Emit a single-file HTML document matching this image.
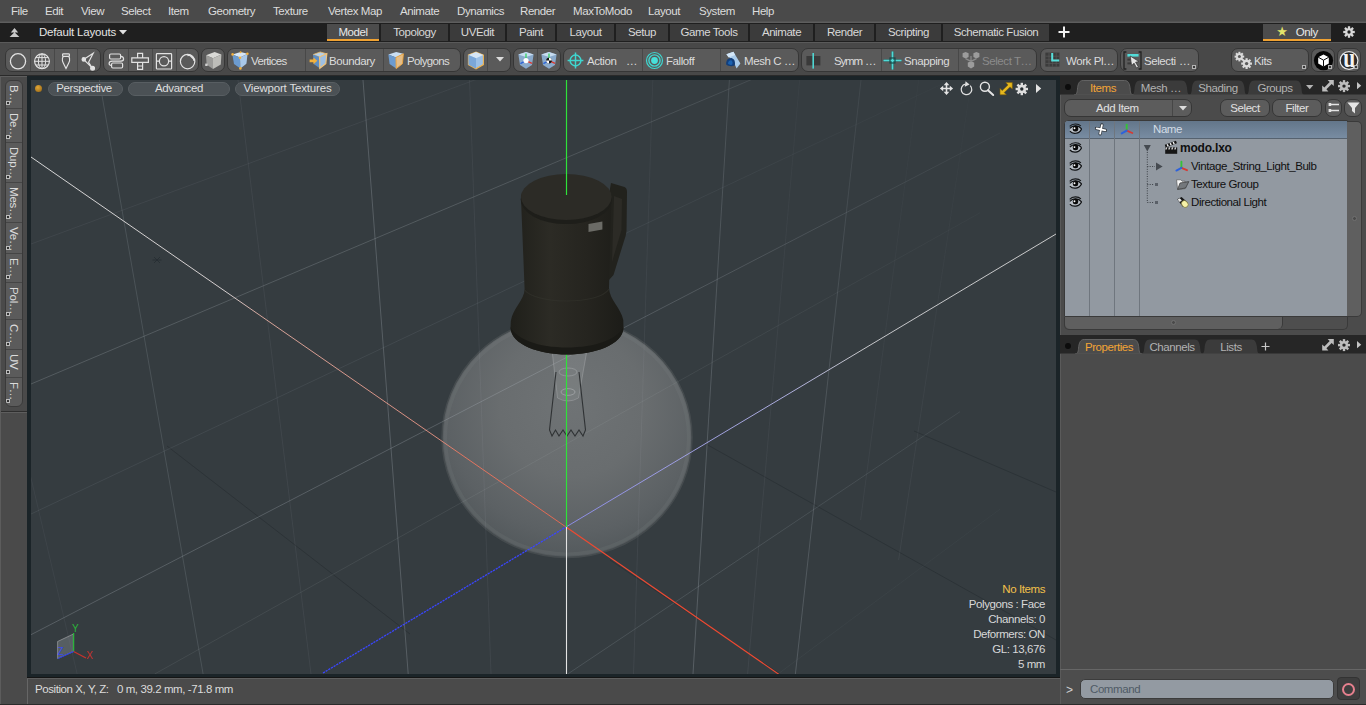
<!DOCTYPE html>
<html lang="en">
<head>
<meta charset="utf-8">
<title>modo.lxo</title>
<style>
*{box-sizing:border-box;margin:0;padding:0}
html,body{width:1366px;height:705px;overflow:hidden;background:#4a4a4a}
body{font-family:"Liberation Sans","DejaVu Sans",sans-serif;font-size:11.5px;letter-spacing:-0.42px;color:#d6d6d6;position:relative}
.abs{position:absolute}
/* menu bar */
#menubar{position:absolute;left:0;top:0;width:1366px;height:23px;background:#4a4a4a;border-bottom:1px solid #5e5e5e;box-shadow:inset 0 -1px 0 #535353}
#menubar span{position:absolute;top:4px;line-height:14px;color:#dcdcdc;white-space:nowrap}
/* layout bar */
#layoutbar{position:absolute;left:0;top:23px;width:1366px;height:19px;background:#1f1f1f}
#layoutbar .lt{position:absolute;top:1px;height:17px;background:#3b3b3b;color:#d8d8d8;text-align:center;line-height:16px;white-space:nowrap}
#layoutbar .lt.act{background:#4c4c4c;border-bottom:2px solid #f0a232;color:#e8e8e8;line-height:16px}
/* toolbar */
#toolbar{position:absolute;left:0;top:42px;width:1366px;height:34px;background:#484848;border-top:1px solid #5a5a5a;border-bottom:1px solid #2a2a2a}
.grp{position:absolute;top:5px;height:24px;background:#5a5a5a;border:1px solid #363636;border-radius:7px;overflow:hidden}
.grp i{position:absolute;top:0;width:1px;height:22px;background:#484848}
.grp span{position:absolute;top:1px;line-height:23px;color:#dcdcdc;white-space:nowrap}
.grp svg{position:absolute}
.grp u{position:absolute;width:4px;height:4px;border:1px solid #b4b4b4;background:#3a3a3a;right:2px;bottom:2px}
/* viewport */
#vpframe{position:absolute;left:27px;top:76px;width:1033px;height:601px;background:#1b2428}
#vp{position:absolute;left:4px;top:4px;width:1025px;height:594px;background:#353c40;overflow:hidden}
.vbtn{position:absolute;top:2px;height:14px;border-radius:7px;background:#4b5155;border:1px solid #585e62;color:#dedede;text-align:center;line-height:10px;white-space:nowrap}
#stats{position:absolute;right:11px;top:502px;text-align:right;line-height:15px;color:#d8d8d8;white-space:nowrap}
/* left sidebar */
#leftbar{position:absolute;left:0;top:76px;width:27px;height:629px;background:#4a4a4a;border-left:1px solid #5c5c5c;box-shadow:inset 0 1px 0 #5e5e5e}
#vtabs{position:absolute;left:4px;top:4px;width:18px;height:327px;background:#5b5b5b;border:1px solid #3a3a3a;border-radius:6px;overflow:hidden}
#vtabs div{position:absolute;left:0;width:16px;border-top:1px solid #454545;color:#dcdcdc;writing-mode:vertical-rl;line-height:16px;white-space:nowrap;padding-top:4px;letter-spacing:-0.2px}
#vtabs div:first-child{border-top:none}
#vtabs u{position:absolute;left:0;bottom:3px;width:4px;height:4px;border:1px solid #bdbdbd;background:#333}
/* status bar */
#status{position:absolute;left:27px;top:678px;width:1033px;height:26px;background:#4a4a4a;border-left:1px solid #666;border-top:1px solid #5e5e5e}
#status span{position:absolute;left:7px;top:3px;line-height:14px;color:#dcdcdc;white-space:nowrap}
/* right panel */
#right{position:absolute;left:1060px;top:76px;width:306px;height:629px;background:#4b4b4b}
.tabbar{position:absolute;left:0;width:306px;height:19px;background:#262626}
.tab{position:absolute;top:4px;height:15px;background:none;color:#b2b2b2;text-align:center;line-height:16px;white-space:nowrap}
.tab.act{color:#f3a536}
.rbtn{position:absolute;height:18px;background:#5c5c5c;border:1px solid #363636;border-radius:7px;color:#e0e0e0;text-align:center;line-height:16px;white-space:nowrap;overflow:hidden}
#list{position:absolute;left:4px;top:44px;width:284px;height:197px;background:#9299a1;border:1px solid #3a3a3a;border-radius:4px 0 0 0;overflow:hidden}
#list .hdr{position:absolute;left:0;top:0;width:284px;height:18px;background:linear-gradient(#63768a,#788ca2);border-bottom:1px solid #56626f}
#list .col{position:absolute;top:0;width:1px;height:197px;background:#6f767e}
#list .row{position:absolute;left:0;width:284px;height:18px;line-height:18px;color:#101010;white-space:nowrap}
#footer{position:absolute;left:0;top:704px;width:1366px;height:1px;background:#2b2b2b}
</style>
</head>
<body>
<div id="menubar">
<span style="left:11px">File</span><span style="left:45px">Edit</span><span style="left:81px">View</span><span style="left:121px">Select</span><span style="left:168px">Item</span><span style="left:208px">Geometry</span><span style="left:273px">Texture</span><span style="left:328px">Vertex Map</span><span style="left:400px">Animate</span><span style="left:457px">Dynamics</span><span style="left:520px">Render</span><span style="left:573px">MaxToModo</span><span style="left:648px">Layout</span><span style="left:699px">System</span><span style="left:752px">Help</span>
</div>
<div id="layoutbar">
<svg class="abs" style="left:9px;top:5px" width="11" height="10" viewBox="0 0 11 10"><path d="M5.5 0L9.2 4.6H1.8Z M5.5 4.2L10.4 9H0.6Z" fill="#c9c9c9"/></svg>
<span class="abs" style="left:39px;top:2px;line-height:14px;color:#e4e4e4;white-space:nowrap;letter-spacing:-0.19px">Default Layouts</span>
<svg class="abs" style="left:119px;top:7px" width="8" height="5" viewBox="0 0 8 5"><path d="M0 0H8L4 4.6Z" fill="#e0e0e0"/></svg>
<div class="lt act" style="left:327px;width:52px">Model</div>
<div class="lt" style="left:381px;width:67px">Topology</div>
<div class="lt" style="left:450px;width:55px">UVEdit</div>
<div class="lt" style="left:507px;width:48px">Paint</div>
<div class="lt" style="left:557px;width:57px">Layout</div>
<div class="lt" style="left:616px;width:52px">Setup</div>
<div class="lt" style="left:670px;width:78px">Game Tools</div>
<div class="lt" style="left:750px;width:63px">Animate</div>
<div class="lt" style="left:815px;width:59px">Render</div>
<div class="lt" style="left:876px;width:65px">Scripting</div>
<div class="lt" style="left:943px;width:106px">Schematic Fusion</div>
<svg class="abs" style="left:1058px;top:3px" width="12" height="12" viewBox="0 0 12 12"><path d="M6 0.5V11.5M0.5 6H11.5" stroke="#f2f2f2" stroke-width="2"/></svg>
<div class="lt act" style="left:1263px;width:68px"><span style="color:#e3e36a;font-size:13px;position:relative;top:0px">&#9733;</span>&nbsp;&nbsp; Only</div>
<svg class="abs" style="left:1342px;top:2px" width="14" height="14" viewBox="-8 -8 16 16"><g fill="#d8d8d8"><circle r="4.4"/><g id="gt1"><rect x="-1.3" y="-6.6" width="2.6" height="13.2"/><rect x="-1.3" y="-6.6" width="2.6" height="13.2" transform="rotate(45)"/><rect x="-1.3" y="-6.6" width="2.6" height="13.2" transform="rotate(90)"/><rect x="-1.3" y="-6.6" width="2.6" height="13.2" transform="rotate(135)"/></g></g><circle r="1.9" fill="#1f1f1f"/></svg>

</div>
<div id="toolbar">
<!-- group 1 : primitive icons -->
<div class="grp" style="left:5px;width:96px">
<i style="left:24px"></i><i style="left:48px"></i><i style="left:71px"></i>
<svg style="left:2px;top:2px" width="20" height="20" viewBox="0 0 20 20"><circle cx="10" cy="10.3" r="7.6" fill="none" stroke="#e2e2e2" stroke-width="1.3"/></svg>
<svg style="left:26px;top:2px" width="20" height="20" viewBox="0 0 20 20" fill="none" stroke="#e2e2e2" stroke-width="1"><circle cx="10" cy="10.3" r="7.4" stroke-width="1.2"/><ellipse cx="10" cy="10.3" rx="3.6" ry="7.4"/><path d="M10 2.9V17.7M2.6 10.3H17.4M3.7 6.6H16.3M3.7 14H16.3"/></svg>
<svg style="left:50px;top:2px" width="20" height="20" viewBox="0 0 20 20" fill="none" stroke="#e2e2e2" stroke-width="1.2"><rect x="6.6" y="2.8" width="6.8" height="2.6" rx="0.8"/><path d="M7.2 5.4C5.2 8.6 6.4 10.6 10 17.4C13.6 10.6 14.8 8.6 12.8 5.4"/></svg>
<svg style="left:73px;top:2px" width="22" height="20" viewBox="0 0 22 20" fill="none" stroke="#e2e2e2" stroke-width="1.2"><path d="M4.6 8.4L14.2 2.2L9.6 11.2L13.4 17.2L4.6 8.4"/><circle cx="4.8" cy="8.4" r="1.7" fill="#e2e2e2"/><circle cx="13.6" cy="17.2" r="1.9" fill="#e2e2e2"/></svg>
</div>
<!-- group 2 : uv icons -->
<div class="grp" style="left:103px;width:96px">
<i style="left:24px"></i><i style="left:48px"></i><i style="left:72px"></i>
<svg style="left:2px;top:2px" width="20" height="20" viewBox="0 0 20 20" fill="none" stroke="#e2e2e2" stroke-width="1.2"><rect x="3.6" y="3" width="11" height="5" rx="1.2"/><rect x="5.6" y="12" width="11" height="5" rx="1.2"/><path d="M14.6 5.4C18.4 5.6 18.6 9.8 15 10.2H6C2.2 10.4 2.2 14.4 5.6 14.6"/></svg>
<svg style="left:26px;top:2px" width="20" height="20" viewBox="0 0 20 20" fill="none" stroke="#e2e2e2" stroke-width="1.2"><path d="M7.6 2.4H12.6V6.8H18.4V11.4H12.6V18.4H7.6V11.4H1.8V6.8H7.6ZM7.6 6.8H12.6M7.6 11.4H12.6M7.6 15H12.6"/></svg>
<svg style="left:50px;top:2px" width="20" height="20" viewBox="0 0 20 20" fill="none" stroke="#e2e2e2" stroke-width="1.2"><rect x="2.4" y="2.6" width="15.2" height="15.4" rx="0.8"/><circle cx="10" cy="10.2" r="4.6"/><path d="M2.4 10.2H5.4M14.6 10.2H17.6"/></svg>
<svg style="left:74px;top:2px" width="20" height="20" viewBox="0 0 20 20" fill="none" stroke="#e2e2e2" stroke-width="1.2"><circle cx="9.6" cy="10.6" r="7.2"/><path d="M9.4 4.6C12.6 3.4 16 6.6 15.8 9.8M11.2 3.8L16.6 9"/></svg>
</div>
<!-- cube -->
<div class="grp" style="left:201px;width:24px">
<svg style="left:2px;top:2px" width="19" height="19" viewBox="0 0 19 19"><path d="M2 4.2L10.6 1L17.4 3.6L9 7.2Z" fill="#d9d9d6"/><path d="M2 4.2L9 7.2V18L2.6 13.6Z" fill="#9c9c9a"/><path d="M9 7.2L17.4 3.6L16.8 13.4L9 18Z" fill="#bdbdb9"/><rect x="1.2" y="12.6" width="2.4" height="2.4" fill="#cfcfcf"/></svg>
</div>
<!-- Vertices / Boundary / Polygons -->
<div class="grp" style="left:227px;width:234px">
<i style="left:77px"></i><i style="left:155px"></i>
<svg style="left:3px;top:2px" width="18" height="19" viewBox="0 0 18 19"><path d="M1.4 3.4L9.6 1L16.6 2.8L9 6.6Z" fill="#d7e6f5"/><path d="M1.4 3.4L9 6.6L9.4 17.6L3 13Z" fill="#6c9bcf"/><path d="M9 6.6L16.6 2.8L15.4 12.8L9.4 17.6Z" fill="#a9c8e8"/><g fill="#f3b13c"><circle cx="1.6" cy="3.4" r="1.3"/><circle cx="9" cy="6.8" r="1.3"/><circle cx="16.4" cy="2.8" r="1.3"/><circle cx="9.4" cy="17.4" r="1.3"/><circle cx="9.6" cy="1.2" r="1"/></g></svg>
<span style="left:23px;letter-spacing:-0.65px">Vertices</span>
<svg style="left:81px;top:2px" width="19" height="19" viewBox="0 0 19 19"><path d="M4 3.6L11.2 1L17.8 2.8L10.6 6Z" fill="#b5d0ea" stroke="#e9b765" stroke-width="0.8"/><path d="M4 3.6L10.6 6L10.8 17.2L5 13.2Z" fill="#5e8ec4"/><path d="M10.6 6L17.8 2.8L16.8 12.6L10.8 17.2Z" fill="#9dbfe3" stroke="#f0c27a" stroke-width="1.2"/><path d="M0.6 8.4H4.4V6.4L8.4 9.8L4.4 13.2V11.2H0.6Z" fill="#f3b13c"/></svg>
<span style="left:101px">Boundary</span>
<svg style="left:159px;top:2px" width="18" height="19" viewBox="0 0 18 19"><path d="M1.4 3.4L9.2 1L16.4 2.8L9 6.4Z" fill="#c9def2"/><path d="M1.4 3.4L9 6.4L9.2 17.6L2.6 13Z" fill="#6c9bcf"/><path d="M9 6.4L16.4 2.8L15.4 12.8L9.2 17.6Z" fill="#e4bd88" stroke="#f0a840" stroke-width="0.9"/></svg>
<span style="left:179px;letter-spacing:-0.65px">Polygons</span>
</div>
<!-- cube + dropdown -->
<div class="grp" style="left:463px;width:48px">
<i style="left:23px"></i>
<svg style="left:3px;top:2px" width="18" height="19" viewBox="0 0 18 19"><path d="M1.4 4L9 1L16.4 4V13.6L9 17.8L1.4 13.6Z" fill="#9cc0e6" stroke="#f0b450" stroke-width="1.1"/><path d="M1.4 4L9 7.2L16.4 4L9 1Z" fill="#d6e6f6"/><path d="M1.4 4L9 7.2V17.8L1.4 13.6Z" fill="#7ba7d8"/></svg>
<svg style="left:32px;top:8px" width="8" height="5" viewBox="0 0 8 5"><path d="M0 0H8L4 4.6Z" fill="#dcdcdc"/></svg>
</div>
<!-- two action center icons -->
<div class="grp" style="left:513px;width:48px">
<i style="left:23px"></i>
<svg style="left:3px;top:2px" width="18" height="19" viewBox="0 0 18 19"><path d="M1.4 3.6L9 1L16.6 3.6L15 14L9 17.8L3 14Z" fill="#8fb2d8" opacity="0.9"/><path d="M1.4 3.6L9 6L16.6 3.6L9 1Z" fill="#c8dcf0"/><path d="M9 9.6V2.4" stroke="#3ecf6a" stroke-width="1.4"/><path d="M9 9.6L3.4 12.6" stroke="#2c63d8" stroke-width="1.4"/><path d="M9 9.6L15 12.4" stroke="#e03a2e" stroke-width="1.4"/><circle cx="9" cy="9.6" r="2.6" fill="#fff"/></svg>
<svg style="left:26px;top:2px" width="18" height="19" viewBox="0 0 18 19"><path d="M1.4 3.6L9 1L16.6 3.6L15 14L9 17.8L3 14Z" fill="#8fb2d8" opacity="0.9"/><path d="M1.4 3.6L9 6L16.6 3.6L9 1Z" fill="#c8dcf0"/><path d="M9 9.6V2.4" stroke="#3ecf6a" stroke-width="1.4"/><path d="M9 9.6L3.4 12.6" stroke="#2c63d8" stroke-width="1.4"/><path d="M9 9.6L15 12.4" stroke="#e03a2e" stroke-width="1.4"/><circle cx="9" cy="9.6" r="2.8" fill="#111"/><path d="M9 9.6V6.8A2.8 2.8 0 0 1 11.8 9.6ZM9 9.6V12.4A2.8 2.8 0 0 1 6.2 9.6Z" fill="#fff"/></svg>
</div>
<!-- Action / Falloff / Mesh C -->
<div class="grp" style="left:563px;width:236px">
<i style="left:78px"></i><i style="left:156px"></i>
<svg style="left:3px;top:3px" width="17" height="17" viewBox="0 0 17 17" fill="none" stroke="#3fd6cf" stroke-width="1.5"><circle cx="8.5" cy="8.5" r="5.4"/><path d="M8.5 0.6V16.4M0.6 8.5H16.4"/></svg>
<span style="left:23px">Action</span><span style="left:62px">…</span>
<svg style="left:81px;top:2px" width="19" height="19" viewBox="0 0 19 19" fill="none" stroke="#3fd6cf"><circle cx="9.5" cy="9.5" r="8" stroke-width="1.2"/><circle cx="9.5" cy="9.5" r="5.6" stroke-width="1.4"/><circle cx="9.5" cy="9.5" r="3.4" fill="#48e0da" stroke="none"/></svg>
<span style="left:102px">Falloff</span>
<svg style="left:160px;top:2px" width="18" height="19" viewBox="0 0 18 19"><path d="M2.4 3.2L9.4 0.8L16.4 12.4L12.6 17.6L9.4 10.6Z" fill="#a9cbea"/><path d="M2.4 3.2L9.4 0.8L11.2 4L4.6 6.4Z" fill="#d3e6f7"/><path d="M2.2 13.6C1.6 9.6 4.4 6.6 8 7.2C10.6 8 11.6 11.4 10.6 14.6C8 15.6 4 15.4 2.2 13.6Z" fill="#123f7c"/><path d="M4 12.8C4 10.4 5.6 9 7.6 9.4C8.8 10.4 8.8 12.4 8 13.8C6.6 14.2 5 13.8 4 12.8Z" fill="#1b62b0"/></svg>
<span style="left:180px">Mesh C</span><span style="left:220px">…</span>
</div>
<!-- Symm / Snapping / Select T -->
<div class="grp" style="left:801px;width:236px">
<i style="left:79px"></i><i style="left:156px"></i>
<svg style="left:4px;top:4px" width="16" height="16" viewBox="0 0 16 16"><rect x="0.4" y="3" width="14" height="9.4" fill="#3a3a3a"/><rect x="6.4" y="0" width="1.6" height="15.6" fill="#4fd6d2"/></svg>
<span style="left:32px;letter-spacing:-1.2px">Symm</span><span style="left:63px;letter-spacing:-1px">…</span>
<svg style="left:81px;top:2px" width="19" height="19" viewBox="0 0 19 19"><path d="M9.5 0.6V18.4M0.6 9.5H18.4" stroke="#2aa9a6" stroke-width="2.2"/><path d="M9.5 0.6V18.4M0.6 9.5H18.4" stroke="#55e0dc" stroke-width="0.9"/><rect x="7" y="7" width="5" height="5" fill="none" stroke="#1a4a4a" stroke-width="1.2"/></svg>
<span style="left:102px">Snapping</span>
<svg style="left:160px;top:2px" width="18" height="19" viewBox="0 0 18 19"><g fill="#9c9c9c"><path d="M0.6 2.2L3.6 1L6.6 2.2V6L3.6 7.6L0.6 6Z"/><path d="M11.4 2.2L14.4 1L17.4 2.2V6L14.4 7.6L11.4 6Z"/><path d="M5.8 11.6L9 10.4L12.2 11.6V15.6L9 17.4L5.8 15.6Z"/></g><path d="M3.6 7.6L9 10.4L14.4 7.6M9 10.4V5" stroke="#8a8a8a" stroke-width="1.3" fill="none"/></svg>
<span style="left:180px;color:#8b8b8b">Select T…</span>
</div>
<!-- Work Pl -->
<div class="grp" style="left:1040px;width:78px">
<svg style="left:4px;top:3px" width="16" height="16" viewBox="0 0 16 16"><rect x="0.4" y="0.6" width="14" height="14" fill="#3b3b3b"/><path d="M4 0.6V14.6M7.6 0.6V14.6M11.2 0.6V14.6M0.4 4.2H14.4M0.4 7.8H14.4M0.4 11.4H14.4" stroke="#555" stroke-width="0.8"/><path d="M7.2 1V8.4H14.2" stroke="#58e0dc" stroke-width="2" fill="none"/></svg>
<span style="left:25px">Work Pl…</span>
</div>
<!-- Selecti -->
<div class="grp" style="left:1120px;width:79px">
<svg style="left:2px;top:2px" width="19" height="19" viewBox="0 0 19 19"><path d="M3.4 1H1V18H3.4M15.6 1H18V18H15.6" stroke="#222" stroke-width="1.3" fill="none"/><rect x="4.4" y="3" width="11.2" height="2.6" fill="#52dcd8"/><rect x="4.4" y="7.6" width="8" height="2" fill="#3a3a3a"/><rect x="4.4" y="11.4" width="8" height="2" fill="#3a3a3a"/><path d="M7.2 5L16 10.6L12.6 11.2L15.4 16L13.6 17L11 12.2L8.6 14.6Z" fill="#e4e4e4" stroke="#333" stroke-width="0.7"/></svg>
<span style="left:23px">Selecti</span><span style="left:58px">…</span><u></u>
</div>
<!-- Kits -->
<div class="grp" style="left:1231px;width:78px">
<svg style="left:2px;top:2px" width="19" height="19" viewBox="0 0 19 19"><g fill="#dadada"><g transform="translate(5.4 5.6)"><circle r="3.4"/><rect x="-1" y="-4.8" width="2" height="9.6"/><rect x="-1" y="-4.8" width="2" height="9.6" transform="rotate(45)"/><rect x="-1" y="-4.8" width="2" height="9.6" transform="rotate(90)"/><rect x="-1" y="-4.8" width="2" height="9.6" transform="rotate(135)"/></g><g transform="translate(12.6 12.6)"><circle r="3.8"/><rect x="-1.1" y="-5.4" width="2.2" height="10.8"/><rect x="-1.1" y="-5.4" width="2.2" height="10.8" transform="rotate(45)"/><rect x="-1.1" y="-5.4" width="2.2" height="10.8" transform="rotate(90)"/><rect x="-1.1" y="-5.4" width="2.2" height="10.8" transform="rotate(135)"/></g></g><circle cx="5.4" cy="5.6" r="1.5" fill="#5a5a5a"/><circle cx="12.6" cy="12.6" r="1.7" fill="#5a5a5a"/></svg>
<span style="left:22px">Kits</span><u></u>
</div>
<!-- modo cube button -->
<div class="grp" style="left:1311px;width:24px">
<svg style="left:1px;top:1px" width="21" height="21" viewBox="0 0 21 21"><circle cx="10.5" cy="10.6" r="9.6" fill="#060606"/><path d="M10.5 4.4L15.8 7.2V13.4L10.5 16.6L5.2 13.4V7.2Z" fill="#fff"/><path d="M5.2 7.2L10.5 10.2L15.8 7.2M10.5 10.2V16.6" stroke="#060606" stroke-width="1" fill="none"/></svg><u></u>
</div>
<!-- unreal button -->
<div class="grp" style="left:1337px;width:24px">
<svg style="left:1px;top:1px" width="21" height="21" viewBox="0 0 21 21"><circle cx="10" cy="10.5" r="8.9" fill="#2a2a2a" stroke="#e8e8e8" stroke-width="1.2"/><text transform="translate(10.2 16.6) scale(0.8 1)" text-anchor="middle" font-family="Liberation Serif, serif" font-weight="bold" font-size="27" fill="#f4f4f4" letter-spacing="0">u</text></svg><u></u>
</div>

</div>
<div id="leftbar">
<div id="vtabs">
<div style="top:0;height:27px">B…<u></u></div>
<div style="top:27px;height:34px">De…<u></u></div>
<div style="top:61px;height:40px">Dup…<u></u></div>
<div style="top:101px;height:40px">Mes…<u></u></div>
<div style="top:141px;height:31px">Ve…<u></u></div>
<div style="top:172px;height:29px">E…<u></u></div>
<div style="top:201px;height:37px">Pol…<u></u></div>
<div style="top:238px;height:30px">C…<u></u></div>
<div style="top:268px;height:28px">UV<u></u></div>
<div style="top:296px;height:29px">F…<u></u></div>
</div>
<div class="abs" style="left:0;top:335px;width:26px;height:1px;background:#2e2e2e"></div>
<div class="abs" style="left:0;top:336px;width:26px;height:1px;background:#5e5e5e"></div>

</div>
<div id="vpframe"><div id="vp">
<svg class="abs" style="left:0;top:0" width="1025" height="594" viewBox="31 80 1025 594">
<defs>
<linearGradient id="gx" gradientUnits="userSpaceOnUse" x1="31" y1="157" x2="566" y2="527"><stop offset="0" stop-color="#e6e6e6"/><stop offset="0.37" stop-color="#e6dede"/><stop offset="0.43" stop-color="#e8b0a4"/><stop offset="0.76" stop-color="#ea9484"/><stop offset="0.8" stop-color="#f07860"/><stop offset="1" stop-color="#f0674e"/></linearGradient>
<linearGradient id="gz" gradientUnits="userSpaceOnUse" x1="566" y1="527" x2="1056" y2="234"><stop offset="0" stop-color="#8f8ff2"/><stop offset="0.45" stop-color="#b9b9ee"/><stop offset="0.6" stop-color="#d4d4d8"/><stop offset="1" stop-color="#dadada"/></linearGradient>
<radialGradient id="gb" gradientUnits="userSpaceOnUse" cx="572" cy="405" r="160"><stop offset="0" stop-color="#6f7375"/><stop offset="0.45" stop-color="#696d6f"/><stop offset="0.8" stop-color="#5c6164"/><stop offset="1" stop-color="#51575a"/></radialGradient>
<linearGradient id="gh" x1="0" y1="0" x2="1" y2="0"><stop offset="0" stop-color="#1f1f1a"/><stop offset="0.35" stop-color="#2c2b25"/><stop offset="0.7" stop-color="#25241f"/><stop offset="1" stop-color="#1c1c18"/></linearGradient>
<linearGradient id="gfade" gradientUnits="userSpaceOnUse" x1="640" y1="470" x2="1040" y2="170"><stop offset="0" stop-color="#fff"/><stop offset="0.45" stop-color="#bbb"/><stop offset="1" stop-color="#2a2a2a"/></linearGradient><mask id="mfade" maskUnits="userSpaceOnUse" x="31" y="80" width="1025" height="594"><rect x="31" y="80" width="1025" height="594" fill="url(#gfade)"/></mask>
</defs>
<ellipse cx="567" cy="437.5" rx="125" ry="120" fill="url(#gb)" stroke="#454b4e" stroke-width="1.5"/>
<ellipse cx="567" cy="437.5" rx="121.6" ry="116.6" fill="none" stroke="#8d9193" stroke-opacity="0.13" stroke-width="3.4"/>
<g stroke="#2a3135" stroke-width="1" opacity="0.8" fill="none">
<path d="M706.0 444.0L1056.0 640.0"/>
<path d="M914.0 431.0L1056.0 492.0"/>
<path d="M167.0 446.0L410.0 634.0"/>
<path d="M610.0 560.0L780.0 674.0"/>
</g>
<g stroke="#b9c2c8" stroke-width="0.9" fill="none" mask="url(#mfade)">
<path d="M29.1 470.0L77.2 674.0" stroke-opacity="0.07"/>
<path d="M99.3 80.0L203.1 674.0" stroke-opacity="0.19"/>
<path d="M238.0 80.0L311.0 674.0" stroke-opacity="0.09"/>
<path d="M363.0 80.0L408.2 674.0" stroke-opacity="0.29"/>
<path d="M469.5 80.0L491.0 674.0" stroke-opacity="0.09"/>
<path d="M652.8 80.0L633.5 674.0" stroke-opacity="0.09"/>
<path d="M729.4 80.0L693.0 674.0" stroke-opacity="0.29"/>
<path d="M799.6 80.0L747.6 674.0" stroke-opacity="0.09"/>
<path d="M861.0 80.0L795.4 674.0" stroke-opacity="0.27"/>
<path d="M918.7 80.0L860.6 520.0" stroke-opacity="0.09"/>
<path d="M971.5 80.0L898.6 560.0" stroke-opacity="0.10"/>
<path d="M31.0 244.0L478.0 78.8" stroke-opacity="0.09"/>
<path d="M31.0 384.0L752.0 79.3" stroke-opacity="0.26"/>
<path d="M31.0 514.0L955.0 77.9" stroke-opacity="0.11"/>
<path d="M31.0 634.7L1000.0 133.0" stroke-opacity="0.29"/>
<path d="M154.7 674.0L980.0 212.8" stroke-opacity="0.12"/>
<path d="M567.7 674.0L960.0 411.7" stroke-opacity="0.19"/>
<path d="M778.0 674.0L1000.0 509.1" stroke-opacity="0.06"/>
</g>
<g fill="none">
<path d="M552 350L557.5 398Q568 404 578.5 398L587 350" fill="#a0a3a5" fill-opacity="0.22" stroke="#a8abad" stroke-opacity="0.45"/>
<ellipse cx="568" cy="392" rx="7" ry="3.4" stroke="#b0b3b5" stroke-opacity="0.6"/><ellipse cx="568" cy="372" rx="9" ry="4" stroke="#b0b3b5" stroke-opacity="0.45"/>
<path d="M556 372L549.5 430L552 436L555.5 430L559 436L563 430L567 436L571 430L575 436L579 430L583 436L585.5 430L579 372" stroke="#2f3234" stroke-width="1.1"/>
</g>
<path d="M31 157L566 527" stroke="url(#gx)" stroke-width="0.9" fill="none"/>
<path d="M566 527L779 674.4" stroke="#ee4a32" stroke-width="1.2" fill="none"/>
<path d="M323 673L566 527" stroke="#3a46ff" stroke-width="1.3" stroke-dasharray="2.2 0.9" fill="none"/>
<path d="M566 527L1056 234" stroke="url(#gz)" stroke-width="0.9" fill="none"/>
<path d="M566.5 527V674" stroke="#e4e4e4" stroke-width="1.1"/>
<path d="M566.5 340V527" stroke="#2fe23a" stroke-width="1.2"/>
<g>
<path d="M611 183L624.5 187Q627 188 627 192L626.5 231Q626 236 624 241L613.5 275L609 280L608 200Z" fill="#22221d"/>
<path d="M614 196L622 199L621.5 230L612 262Z" fill="#2c2b26"/>
<path d="M521 199L524.6 289C524.4 300 513 308 510.8 321L510.5 328C511 345 540 354.5 567 354.5C594 354.5 623 345 623.5 328L623.3 320C621 308 609.6 300 609 288L611.5 199Z" fill="url(#gh)"/>
<path d="M510.5 327C511 345 540 354.5 567 354.5C594 354.5 623 345 623.5 327C618 339 596 347.5 567 347.5C538 347.5 516 339 510.5 327Z" fill="#1a1a16"/>
<path d="M524.6 290C530 297 548 301 567 301C586 301 604 297 609 289" fill="none" stroke="#34332d" stroke-width="1.2" stroke-opacity="0.6"/>
<ellipse cx="566.3" cy="199.5" rx="45.6" ry="24.6" fill="#1e1e1a"/>
<ellipse cx="566.3" cy="197" rx="45.4" ry="23" fill="#2c2b26"/>
<path d="M588.5 224L602.4 221.6V229.6L588.5 232Z" fill="#6b6b66"/>
</g>
<path d="M566.5 80V195" stroke="#2fe23a" stroke-width="1.2"/>
<g fill="none" stroke-width="1.3">
<path d="M57.6 641.5L73.4 634V651.5L57.6 658.5Z" fill="#8a9096" fill-opacity="0.4" stroke="#c8c8c8" stroke-opacity="0.6" stroke-width="0.8"/>
<path d="M73.6 633V651.5" stroke="#2bb43a"/><path d="M73.6 651.5L86 658" stroke="#c8322c"/><path d="M73.6 651.5L58 658.5" stroke="#2c3ee0"/>
</g>
<g font-family="Liberation Sans, sans-serif" font-size="10" letter-spacing="0"><text x="72" y="632" fill="#2bb43a">Y</text><text x="86.2" y="658.6" fill="#c8322c">X</text><text x="57.5" y="654.5" fill="#3a4cf0">Z</text></g>
<path d="M154 257L160 263M160 257L154 263M152.5 260H161.5" stroke="#222a2e" stroke-width="0.8" opacity="0.8"/>
</svg>
<div class="abs" style="left:4px;top:5px;width:7px;height:7px;border-radius:50%;background:radial-gradient(circle at 40% 35%,#e0a637,#a5731c 75%)"></div>
<div class="vbtn" style="left:17px;width:75px;padding-right:3px">Perspective</div>
<div class="vbtn" style="left:97px;width:102px">Advanced</div>
<div class="vbtn" style="left:204px;width:105px;letter-spacing:-0.18px">Viewport Textures</div>
<svg class="abs" style="left:906px;top:0" width="110" height="18" viewBox="937 80 110 18">
<g fill="#e4e4e4" stroke="none">
<path d="M946.5 82L949.3 85.2H947.3V87.7H949.8V85.7L953.1 88.5L949.8 91.3V89.3H947.3V91.8H949.3L946.5 95L943.7 91.8H945.7V89.3H943.2V91.3L939.9 88.5L943.2 85.7V87.7H945.7V85.2H943.7Z"/>
</g>
<path d="M970.2 85.6A5.3 5.3 0 1 1 965.4 84.2" fill="none" stroke="#e0e0e0" stroke-width="1.3"/><path d="M965.2 81.6L969.6 84.2L965.2 87Z" fill="#e0e0e0" transform="rotate(8 967 84)"/>
<circle cx="984.9" cy="86.8" r="4.5" fill="none" stroke="#e4e4e4" stroke-width="1.4"/><path d="M988 90.2L993.2 95" stroke="#e4e4e4" stroke-width="2" stroke-linecap="round"/>
<g><path d="M1012.3 82.6V89L1010 86.9L1004.2 92.6L1006.4 94.8H1000V88.4L1002.2 90.6L1008 84.9L1005.8 82.6Z" fill="#e6b81e" stroke="#7a5c0c" stroke-width="0.6"/></g>
<g transform="translate(1021.8 89)"><g fill="#dedede"><circle r="4.3"/><rect x="-1.2" y="-6.2" width="2.4" height="12.4"/><rect x="-1.2" y="-6.2" width="2.4" height="12.4" transform="rotate(45)"/><rect x="-1.2" y="-6.2" width="2.4" height="12.4" transform="rotate(90)"/><rect x="-1.2" y="-6.2" width="2.4" height="12.4" transform="rotate(135)"/></g><circle r="1.7" fill="#252c30"/></g>
<path d="M1036 84.1L1041.2 88.5L1036 93Z" fill="#e4e4e4"/>
</svg>

<div id="stats"><div style="color:#f2c04a">No Items</div><div>Polygons : Face</div><div>Channels: 0</div><div>Deformers: ON</div><div>GL: 13,676</div><div>5 mm</div></div>

</div></div>
<div id="vpline" class="abs" style="left:27px;top:677px;width:1033px;height:1px;background:#151515"></div>
<div id="status"><span>Position X, Y, Z: &nbsp; 0 m, 39.2 mm, -71.8 mm</span></div>
<div id="right">
<div class="abs" style="left:0;top:0;width:1px;height:629px;background:#5a5a5a"></div>
<!-- top tab bar -->
<div class="tabbar" style="top:0">
<div class="abs" style="left:5px;top:8px;width:6px;height:6px;border-radius:50%;background:#0c0c0c"></div>
<!--tabsvg1--><svg class="abs" style="left:0;top:0" width="306" height="19" viewBox="0 0 306 19"><path d="M71.1 19.0C74.1 19.0 74.2 16.0 74.6 11.5C75.2 8.0 76.1 4.5 80.1 4.5H121.5C125.5 4.5 126.4 8.0 127.0 11.5C127.4 16.0 127.5 19.0 130.5 19.0Z" fill="#3b3b3b"/><path d="M128.5 19.0C131.5 19.0 131.6 16.0 132.0 11.5C132.6 8.0 133.5 4.5 137.5 4.5H178.9C182.9 4.5 183.8 8.0 184.4 11.5C184.8 16.0 184.9 19.0 187.9 19.0Z" fill="#3b3b3b"/><path d="M185.5 19.0C188.5 19.0 188.6 16.0 189.0 11.5C189.6 8.0 190.5 4.5 194.5 4.5H235.9C239.9 4.5 240.8 8.0 241.4 11.5C241.8 16.0 241.9 19.0 244.9 19.0Z" fill="#3b3b3b"/><path d="M14.1 19.0C17.1 19.0 17.2 16.0 17.6 11.5C18.2 8.0 19.1 4.5 23.1 4.5H64.5C68.5 4.5 69.4 8.0 70.0 11.5C70.4 16.0 70.5 19.0 73.5 19.0Z" fill="#4b4b4b" stroke="#636363" stroke-width="1"/><rect x="0" y="18.5" width="306" height="1" fill="#4b4b4b"/></svg>
<div class="tab act" style="left:17px;width:52px">Items</div>
<div class="tab" style="left:75px;width:52px">Mesh …</div>
<div class="tab" style="left:132px;width:52px">Shading</div>
<div class="tab" style="left:189px;width:52px">Groups</div>
<svg class="abs" style="left:246px;top:9px" width="8" height="5" viewBox="0 0 8 5"><path d="M0 0H7.4L3.7 4.2Z" fill="#b4b4b4"/></svg>
<svg class="abs" style="left:260px;top:2px" width="46" height="16" viewBox="1320 78 46 16">
<path d="M1333.8 80V86L1331.7 83.9L1326.4 89.2L1328.4 91.6H1322.2V85.4L1324.4 87.4L1329.7 82.1L1327.6 80Z" fill="#bcbcbc"/>
<g transform="translate(1344 86.1)"><g fill="#bebebe"><circle r="4.2"/><rect x="-1.2" y="-6" width="2.4" height="12"/><rect x="-1.2" y="-6" width="2.4" height="12" transform="rotate(45)"/><rect x="-1.2" y="-6" width="2.4" height="12" transform="rotate(90)"/><rect x="-1.2" y="-6" width="2.4" height="12" transform="rotate(135)"/></g><circle r="1.7" fill="#262626"/></g>
<path d="M1357 82.1L1361.2 85.7L1357 89.3Z" fill="#c4c4c4"/>
</svg>

</div>
<!-- buttons row -->
<div class="rbtn" style="left:4px;top:23px;width:128px"><span class="abs" style="left:31px;top:0">Add Item</span><i class="abs" style="left:107px;top:0;width:1px;height:18px;background:#464646"></i><svg class="abs" style="left:114px;top:6px" width="8" height="5" viewBox="0 0 8 5"><path d="M0 0H8L4 4.6Z" fill="#dcdcdc"/></svg></div>
<div class="rbtn" style="left:160px;top:23px;width:50px">Select</div>
<div class="rbtn" style="left:212px;top:23px;width:50px">Filter</div>
<div class="rbtn" style="left:265px;top:23px;width:17px"><svg class="abs" style="left:2px;top:2px" width="12" height="11" viewBox="0 0 12 11"><path d="M2 2.5H11M2 8.5H11" stroke="#e4e4e4" stroke-width="1.4"/><rect x="0.6" y="1" width="2.6" height="3" fill="#e4e4e4"/><rect x="0.6" y="7" width="2.6" height="3" fill="#e4e4e4"/></svg></div>
<div class="rbtn" style="left:284px;top:23px;width:18px"><svg class="abs" style="left:2px;top:2px" width="13" height="12" viewBox="0 0 13 12"><path d="M0.4 0.6H12.6L8 6V11.4L5 9V6Z" fill="#e4e4e4"/></svg></div>
<!-- list -->
<div id="list">
<div class="hdr"></div>
<div class="col" style="left:24px"></div><div class="col" style="left:49px"></div><div class="col" style="left:74px"></div>
<span class="abs" style="left:88px;top:1px;line-height:14px;color:#d3dce6">Name</span>
<svg class="abs" style="left:0;top:0" width="284" height="100" viewBox="0 0 284 100">
<g transform="translate(10.7 7.8)"><path d="M-5.8 -0.4C-3 -3.6 2.8 -3.6 5.8 0.2C3.4 5 -3 5.2 -5.8 2.4" fill="#b8bec5" stroke="none"/><path d="M-6 -2.4C-3.4 -5.6 2.6 -5.6 5.2 -2.8" fill="none" stroke="#16181a" stroke-width="1.1"/><path d="M-5.8 -0.4C-3 -3.8 2.8 -3.8 5.9 0.1" fill="none" stroke="#101214" stroke-width="1.2"/><path d="M-5.8 2.4C-3 5.6 3.6 5.4 5.9 0.1" fill="none" stroke="#101214" stroke-width="1.2"/><rect x="-2.9" y="-3" width="5.4" height="5.6" rx="2.2" fill="#0a0a0a"/><circle cx="-1.2" cy="-0.5" r="0.95" fill="#fff"/></g><g transform="translate(10.7 26.6)"><path d="M-5.8 -0.4C-3 -3.6 2.8 -3.6 5.8 0.2C3.4 5 -3 5.2 -5.8 2.4" fill="#b8bec5" stroke="none"/><path d="M-6 -2.4C-3.4 -5.6 2.6 -5.6 5.2 -2.8" fill="none" stroke="#16181a" stroke-width="1.1"/><path d="M-5.8 -0.4C-3 -3.8 2.8 -3.8 5.9 0.1" fill="none" stroke="#101214" stroke-width="1.2"/><path d="M-5.8 2.4C-3 5.6 3.6 5.4 5.9 0.1" fill="none" stroke="#101214" stroke-width="1.2"/><rect x="-2.9" y="-3" width="5.4" height="5.6" rx="2.2" fill="#0a0a0a"/><circle cx="-1.2" cy="-0.5" r="0.95" fill="#fff"/></g><g transform="translate(10.7 44.7)"><path d="M-5.8 -0.4C-3 -3.6 2.8 -3.6 5.8 0.2C3.4 5 -3 5.2 -5.8 2.4" fill="#b8bec5" stroke="none"/><path d="M-6 -2.4C-3.4 -5.6 2.6 -5.6 5.2 -2.8" fill="none" stroke="#16181a" stroke-width="1.1"/><path d="M-5.8 -0.4C-3 -3.8 2.8 -3.8 5.9 0.1" fill="none" stroke="#101214" stroke-width="1.2"/><path d="M-5.8 2.4C-3 5.6 3.6 5.4 5.9 0.1" fill="none" stroke="#101214" stroke-width="1.2"/><rect x="-2.9" y="-3" width="5.4" height="5.6" rx="2.2" fill="#0a0a0a"/><circle cx="-1.2" cy="-0.5" r="0.95" fill="#fff"/></g><g transform="translate(10.7 62.7)"><path d="M-5.8 -0.4C-3 -3.6 2.8 -3.6 5.8 0.2C3.4 5 -3 5.2 -5.8 2.4" fill="#b8bec5" stroke="none"/><path d="M-6 -2.4C-3.4 -5.6 2.6 -5.6 5.2 -2.8" fill="none" stroke="#16181a" stroke-width="1.1"/><path d="M-5.8 -0.4C-3 -3.8 2.8 -3.8 5.9 0.1" fill="none" stroke="#101214" stroke-width="1.2"/><path d="M-5.8 2.4C-3 5.6 3.6 5.4 5.9 0.1" fill="none" stroke="#101214" stroke-width="1.2"/><rect x="-2.9" y="-3" width="5.4" height="5.6" rx="2.2" fill="#0a0a0a"/><circle cx="-1.2" cy="-0.5" r="0.95" fill="#fff"/></g><g transform="translate(10.7 80.7)"><path d="M-5.8 -0.4C-3 -3.6 2.8 -3.6 5.8 0.2C3.4 5 -3 5.2 -5.8 2.4" fill="#b8bec5" stroke="none"/><path d="M-6 -2.4C-3.4 -5.6 2.6 -5.6 5.2 -2.8" fill="none" stroke="#16181a" stroke-width="1.1"/><path d="M-5.8 -0.4C-3 -3.8 2.8 -3.8 5.9 0.1" fill="none" stroke="#101214" stroke-width="1.2"/><path d="M-5.8 2.4C-3 5.6 3.6 5.4 5.9 0.1" fill="none" stroke="#101214" stroke-width="1.2"/><rect x="-2.9" y="-3" width="5.4" height="5.6" rx="2.2" fill="#0a0a0a"/><circle cx="-1.2" cy="-0.5" r="0.95" fill="#fff"/></g>
<g transform="translate(36 8.4) rotate(12)"><path d="M-4.6 0H4.6M0 -4.6V4.6" stroke="#1a1a1a" stroke-width="3.2" stroke-linecap="round" opacity="0.7"/><path d="M-4.4 0H4.4M0 -4.4V4.4" stroke="#fff" stroke-width="1.8" stroke-linecap="round"/></g>
<g transform="translate(61.7 9)"><path d="M0 0.6V-5.4" stroke="#35c23a" stroke-width="1.9" stroke-linecap="round"/><path d="M0 0.6L5.6 3" stroke="#d63a34" stroke-width="1.9" stroke-linecap="round"/><path d="M0 0.6L-5 3.4" stroke="#2d62dc" stroke-width="1.9" stroke-linecap="round"/></g>
<!-- tree -->
<path d="M78.8 24H85.8L82.3 30.4Z" fill="#454a50"/>
<path d="M82.3 31V81.5M82.3 45.5H90M82.3 63.5H89M82.3 81.5H89" stroke="#3c4046" stroke-width="1" stroke-dasharray="1 1.4" fill="none"/>
<path d="M91 41.6V49.6L97.6 45.6Z" fill="#454a50"/>
<rect x="90" y="62" width="3" height="3" fill="#5a6068"/><rect x="90" y="80" width="3" height="3" fill="#5a6068"/>
<!-- clapper -->
<g><path d="M99.8 23.8L111 19.8L111.9 22.3L100.7 26.4Z" fill="#141414"/><path d="M102.2 23.2L103.2 25.4M105.2 22.1L106.2 24.3M108.2 21L109.2 23.2" stroke="#f2f2f2" stroke-width="1.4"/><rect x="100.2" y="26.4" width="12" height="6.4" fill="#161616"/><path d="M101.6 26.6L100.8 28.4M104.6 26.6L103.8 28.4M107.6 26.6L106.8 28.4M110.6 26.6L109.8 28.4" stroke="#e8e8e8" stroke-width="1.2"/></g>
<g transform="translate(116.4 46.2)"><path d="M0 0.6V-5.4" stroke="#35c23a" stroke-width="1.9" stroke-linecap="round"/><path d="M0 0.6L5.6 3" stroke="#d63a34" stroke-width="1.9" stroke-linecap="round"/><path d="M0 0.6L-5 3.4" stroke="#2d62dc" stroke-width="1.9" stroke-linecap="round"/></g>
<!-- folder -->
<g><path d="M111.6 58.8H115.8L117 60.2H120V67.6L112.6 68.4Z" fill="#f6f6f6" stroke="#4a4a4a" stroke-width="0.6"/><path d="M115 62L123.8 60.6L120.6 67L112.6 68.4Z" fill="#74787c" stroke="#333" stroke-width="0.7"/></g>
<!-- light -->
<g><path d="M112.2 78.2L116.6 76L122.6 81.4L118 86Z" fill="#181818"/><path d="M112.6 78.4L114.8 77.2L116.8 79.4L114.6 81Z" fill="#e8e8e8"/><ellipse cx="119.8" cy="83" rx="3" ry="3.7" transform="rotate(-40 119.8 83)" fill="#f6f2a8" stroke="#6e6a30" stroke-width="0.6"/></g>
</svg>

<div class="row" style="top:18px"><b class="abs" style="left:115px;font-size:12px;letter-spacing:-0.2px">modo.lxo</b></div>
<div class="row" style="top:36px"><span class="abs" style="left:126px">Vintage_String_Light_Bulb</span></div>
<div class="row" style="top:54px"><span class="abs" style="left:126px">Texture Group</span></div>
<div class="row" style="top:72px"><span class="abs" style="left:126px">Directional Light</span></div>
</div>
<!-- scrollbars -->
<div class="abs" style="left:287px;top:45px;width:15px;height:196px;background:#5f5f5f;border:1px solid #3a3a3a;border-left:none;border-radius:0 5px 5px 0"></div>
<div class="abs" style="left:292px;top:140px;width:5px;height:5px;border-radius:50%;background:#4a4a4a;border:1px solid #707070"></div>
<div class="abs" style="left:4px;top:241px;width:284px;height:13px;background:#4e4e4e;border:1px solid #3a3a3a;border-top:none;border-radius:0 0 5px 5px"></div>
<div class="abs" style="left:5px;top:241px;width:218px;height:12px;background:#5f5f5f;border-right:1px solid #3a3a3a;border-radius:0 0 5px 5px"></div>
<div class="abs" style="left:111px;top:244px;width:5px;height:5px;border-radius:50%;background:#4a4a4a;border:1px solid #707070"></div>
<!-- second tab bar -->
<div class="tabbar" style="top:259px">
<div class="abs" style="left:5px;top:8px;width:6px;height:6px;border-radius:50%;background:#0c0c0c"></div>
<!--tabsvg2--><svg class="abs" style="left:0;top:0" width="306" height="19" viewBox="0 0 306 19"><path d="M80.9 19.0C83.9 19.0 84.0 16.0 84.4 11.5C85.0 8.0 85.9 4.5 89.9 4.5H134.5C138.5 4.5 139.4 8.0 140.0 11.5C140.4 16.0 140.5 19.0 143.5 19.0Z" fill="#3b3b3b"/><path d="M141.2 19.0C144.2 19.0 144.3 16.0 144.7 11.5C145.3 8.0 146.2 4.5 150.2 4.5H191.4C195.4 4.5 196.3 8.0 196.9 11.5C197.3 16.0 197.4 19.0 200.4 19.0Z" fill="#3b3b3b"/><path d="M15.2 19.0C18.2 19.0 18.3 16.0 18.7 11.5C19.3 8.0 20.2 4.5 24.2 4.5H73.2C77.2 4.5 78.1 8.0 78.7 11.5C79.1 16.0 79.2 19.0 82.2 19.0Z" fill="#4b4b4b" stroke="#636363" stroke-width="1"/><rect x="0" y="18.5" width="306" height="1" fill="#4b4b4b"/></svg>
<div class="tab act" style="left:20px;width:58px">Properties</div>
<div class="tab" style="left:84px;width:56px">Channels</div>
<div class="tab" style="left:145px;width:52px">Lists</div>
<svg class="abs" style="left:201px;top:7px" width="9" height="9" viewBox="0 0 9 9"><path d="M4.5 0.5V8.5M0.5 4.5H8.5" stroke="#c8c8c8" stroke-width="1.2"/></svg>
<svg class="abs" style="left:260px;top:2px" width="46" height="16" viewBox="1320 78 46 16">
<path d="M1333.8 80V86L1331.7 83.9L1326.4 89.2L1328.4 91.6H1322.2V85.4L1324.4 87.4L1329.7 82.1L1327.6 80Z" fill="#bcbcbc"/>
<g transform="translate(1344 86.1)"><g fill="#bebebe"><circle r="4.2"/><rect x="-1.2" y="-6" width="2.4" height="12"/><rect x="-1.2" y="-6" width="2.4" height="12" transform="rotate(45)"/><rect x="-1.2" y="-6" width="2.4" height="12" transform="rotate(90)"/><rect x="-1.2" y="-6" width="2.4" height="12" transform="rotate(135)"/></g><circle r="1.7" fill="#262626"/></g>
<path d="M1357 82.1L1361.2 85.7L1357 89.3Z" fill="#c4c4c4"/>
</svg>

</div>
<!-- command bar -->
<div class="abs" style="left:0;top:593px;width:306px;height:1px;background:#666"></div>
<div class="abs" style="left:1px;top:594px;width:305px;height:34px;background:#4d4d4d"></div>
<span class="abs" style="left:6px;top:607px;line-height:14px;color:#d0d0d0;font-size:12px">&gt;</span>
<div class="abs" style="left:20px;top:603px;width:254px;height:20px;background:#939aa2;border:1px solid #3c3c3c;border-radius:5px;color:#4f5a66;line-height:18px;padding-left:9px">Command</div>
<div class="abs" style="left:277px;top:601px;width:23px;height:23px;background:#3e3e3e;border:1px solid #333;border-radius:4px"><div class="abs" style="left:4px;top:5px;width:13px;height:13px;border-radius:50%;border:2px solid #e6808e"></div></div>

</div>
<div id="footer"></div>
</body>
</html>
